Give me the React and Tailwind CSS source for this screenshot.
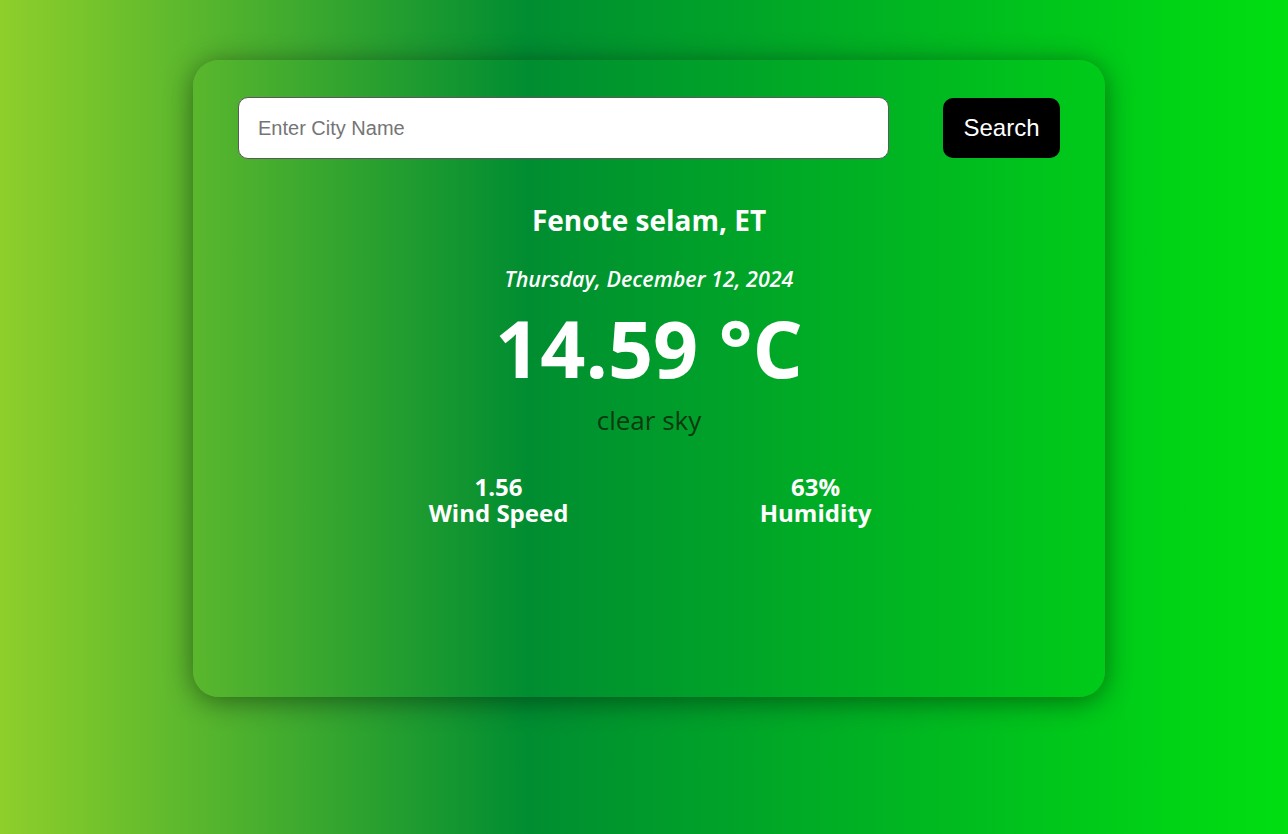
export default function App() {
  return (
    <div className="min-h-screen w-full bg-[linear-gradient(to_right,#8ecf2b_0%,#008d31_41%,#00df11_100%)] bg-fixed flex justify-center pt-[60px]">
      {/* CARD */}
      <div className="ml-[10px] w-[912px] h-[637px] rounded-[26px] bg-[linear-gradient(to_right,#8ecf2b_0%,#008d31_41%,#00df11_100%)] bg-fixed shadow-[0_4px_28px_rgba(0,0,0,0.45)] px-[45px] pt-[37px] flex flex-col items-center font-['Open_Sans',sans-serif]">
        {/* SEARCH */}
        <div className="w-full flex items-center justify-between">
          <input
            type="text"
            placeholder="Enter City Name"
            className="w-[651px] h-[62px] rounded-[10px] border border-[#5a5a5a] bg-white px-[19px] text-[20px] font-['Liberation_Sans',Arial,sans-serif] text-black placeholder:text-[#757575] outline-none"
          />
          <button className="w-[117px] h-[60px] rounded-[10px] bg-black text-white text-[24px] font-['Liberation_Sans',Arial,sans-serif]">
            Search
          </button>
        </div>

        {/* WEATHER */}
        <h2 className="mt-[39px] text-[28px] leading-[44px] font-bold text-white">Fenote selam, ET</h2>
        <p className="mt-[22px] text-[21.5px] leading-[30px] italic font-semibold text-white">Thursday, December 12, 2024</p>
        <p className="mt-[6px] text-[79px] leading-[96px] font-bold text-white">14.59 °C</p>
        <p className="mt-[6px] text-[26px] leading-[36px] font-medium text-[#0b3a0f]">clear sky</p>

        {/* STATS */}
        <div className="mt-[36px] grid grid-cols-2 w-[634px] ml-[16px] text-white font-bold text-[24px] leading-[26px] text-center">
          <div className="flex flex-col">
            <span>1.56</span>
            <span>Wind Speed</span>
          </div>
          <div className="flex flex-col">
            <span>63%</span>
            <span>Humidity</span>
          </div>
        </div>
      </div>
    </div>
  );
}
